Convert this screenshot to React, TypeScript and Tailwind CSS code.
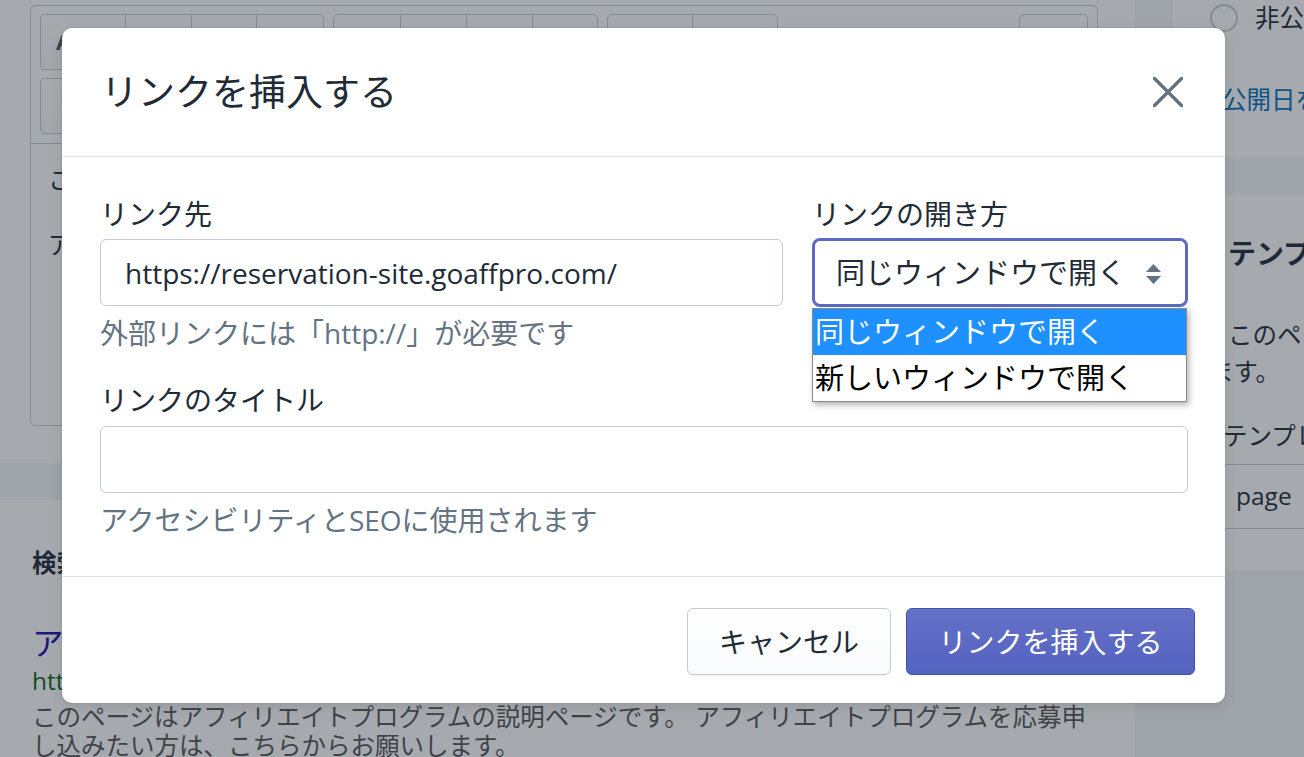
import React from "react";

function ToolGroup({ widths }: { widths: number[] }) {
  return (
    <div className="flex h-[56px] overflow-hidden rounded-[5px] border border-[#c4cdd5] bg-gradient-to-b from-white to-[#f9fafb]">
      {widths.map((w, i) => (
        <div
          key={i}
          style={{ width: w }}
          className={i === 0 ? "h-full" : "h-full border-l border-[#c4cdd5]"}
        />
      ))}
    </div>
  );
}

export default function App() {
  return (
    <div className="relative h-[757px] w-[1304px] overflow-hidden bg-[#f4f6f8] font-['Open_Sans','Noto_Sans_CJK_JP',sans-serif] text-[#212b36]">
      {/* background page */}
      <div className="flex h-full gap-[38px]">
        <div className="flex w-[1135px] shrink-0 flex-col gap-[37px]">
          <div className="bg-white pt-[5px] pb-[37px] pl-[30px] pr-[37px]">
            <div className="flex h-[421px] flex-col rounded-[5px] border border-[#c4cdd5]">
              <div className="flex flex-col gap-[8px] border-b border-[#c4cdd5] px-[9px] pt-[8px] pb-[9px]">
                <div className="flex gap-[9px]">
                  <div className="relative">
                    <ToolGroup widths={[84, 66, 65, 67]} />
                    <span className="absolute left-[16px] top-[14px] text-[22px] font-bold leading-[26px] text-[#454f5b]">A</span>
                  </div>
                  <ToolGroup widths={[66, 66, 66, 65]} />
                  <ToolGroup widths={[84, 85]} />
                  <div className="ml-auto">
                    <ToolGroup widths={[67]} />
                  </div>
                </div>
                <div className="flex gap-[9px]">
                  <ToolGroup widths={[84, 66, 66]} />
                </div>
              </div>
              <div className="flex flex-col gap-[29px] px-[17px] pt-[18px] text-[24.5px] leading-[36px]">
                <p className="whitespace-nowrap">このページはアフィリエイトプログラムの説明ページです。</p>
                <p className="whitespace-nowrap">アフィリエイトプログラムを応募申し込みたい方は、こちらからお願いします。</p>
              </div>
            </div>
          </div>
          <div className="flex-1 bg-white px-[32px] pt-[45px]">
            <h2 className="text-[24.5px] font-bold leading-[36px]">検索結果のプレビュー</h2>
            <p className="mt-[42px] text-[31.5px] leading-[40px] text-[#1a0dab]">アフィリエイトプログラム</p>
            <p className="mt-[3px] text-[24.5px] leading-[30px] text-[#006621]">https://reservation-site.goaffpro.com/pages/affiliate</p>
            <p className="mt-[6px] text-[24.5px] leading-[29px] text-[#545454]">
              このページはアフィリエイトプログラムの説明ページです。 アフィリエイトプログラムを応募申
              <br />
              し込みたい方は、こちらからお願いします。
            </p>
          </div>
        </div>
        <div className="flex flex-1 flex-col gap-[38px]">
          <div className="h-[157px] bg-white pl-[37px]">
            <div className="flex items-center gap-[17px] text-[24.5px] leading-[36px]">
              <span className="h-[28px] w-[28px] rounded-full border-2 border-[#c4cdd5] bg-white" />
              <span className="whitespace-nowrap">非公開</span>
            </div>
            <p className="mt-[46px] whitespace-nowrap pl-[12px] text-[24.5px] leading-[36px] text-[#006fbb]">公開日を設定</p>
          </div>
          <div className="h-[375px] bg-white pt-[38px]">
            <h3 className="whitespace-nowrap pl-[55px] text-[28px] font-bold leading-[40px]">テンプレート</h3>
            <p className="mt-[43px] whitespace-nowrap pl-[55px] text-[24.5px] leading-[37px]">このページのテンプレート</p>
            <p className="whitespace-nowrap pl-[36px] text-[24.5px] leading-[37px]">ます。</p>
            <p className="mt-[28px] whitespace-nowrap pl-[50px] text-[24.5px] leading-[36px]">テンプレート</p>
            <div className="ml-[37px] mt-[10px] flex h-[65px] items-center rounded-[5px] border border-[#c4cdd5] pl-[25px] text-[24.5px]">
              page
            </div>
          </div>
        </div>
      </div>

      {/* backdrop */}
      <div className="absolute inset-0 bg-[#212b36]/40" />

      {/* modal */}
      <div className="absolute left-[62px] top-[28px] flex h-[675px] w-[1163px] flex-col rounded-[10px] bg-white shadow-[0_0_0_1px_rgba(63,63,68,0.05),0_4px_12px_rgba(63,63,68,0.15)]">
        <div className="flex h-[129px] shrink-0 items-center justify-between border-b border-[#dfe3e8] pl-[39px] pr-[42px]">
          <h1 className="text-[37px] font-normal leading-[46px] text-[#212b36]">リンクを挿入する</h1>
          <svg width="30" height="30" viewBox="0 0 30 30" className="text-[#637381]">
            <path d="M1.5 1.5 L28.5 28.5 M28.5 1.5 L1.5 28.5" stroke="currentColor" strokeWidth="3.4" strokeLinecap="round" fill="none" />
          </svg>
        </div>

        <div className="flex-1 pl-[38px] pr-[37px] pt-[39px] text-[28px]">
          <div className="flex gap-[29px]">
            <div className="w-[683px]">
              <label className="block leading-[36px]">リンク先</label>
              <div className="mt-[7px] flex h-[67px] items-center rounded-[6px] border border-[#c4cdd5] pl-[24px] text-[#212b36]">
                https://reservation-site.goaffpro.com/
              </div>
              <p className="mt-[9px] leading-[36px] text-[#637381]">外部リンクには「http://」が必要です</p>
            </div>
            <div className="relative w-[376px]">
              <label className="block leading-[36px]">リンクの開き方</label>
              <div className="relative mt-[6px] flex h-[69px] items-center rounded-[8px] border-[3px] border-[#5c6ac4] pl-[21px] text-[29px] text-[#212b36]">
                同じウィンドウで開く
                <svg width="15" height="20" viewBox="0 0 15 20" className="absolute right-[24px] top-[23px] text-[#637381]">
                  <polygon points="0,8 7.5,0 15,8" fill="currentColor" />
                  <polygon points="0,12 15,12 7.5,20" fill="currentColor" />
                </svg>
                <div className="absolute left-[-3px] top-[67px] z-10 w-[375px] border border-[#8a8a8a] bg-white text-[29px] shadow-[2px_3px_6px_rgba(0,0,0,0.3)]">
                  <div className="h-[46px] bg-[#1e90ff] pl-[2px] leading-[46px] text-white">同じウィンドウで開く</div>
                  <div className="h-[46px] pl-[2px] leading-[46px] text-black">新しいウィンドウで開く</div>
                </div>
              </div>
            </div>
          </div>
          <label className="mt-[31px] block leading-[36px]">リンクのタイトル</label>
          <div className="mt-[8px] h-[67px] w-[1088px] rounded-[6px] border border-[#c4cdd5]" />
          <p className="mt-[9px] leading-[36px] text-[#637381]">アクセシビリティとSEOに使用されます</p>
        </div>

        <div className="flex h-[127px] shrink-0 items-start justify-end gap-[15px] border-t border-[#dfe3e8] pr-[30px] pt-[31px] text-[28px]">
          <button className="flex h-[67px] w-[204px] items-center justify-center rounded-[6px] border border-[#c4cdd5] bg-gradient-to-b from-white to-[#f9fafb] text-[#212b36] shadow-[0_1px_0_rgba(22,29,37,0.05)]">
            キャンセル
          </button>
          <button className="flex h-[67px] w-[289px] items-center justify-center rounded-[6px] border border-[#3f4eae] bg-gradient-to-b from-[#6371c7] to-[#5563c1] text-white shadow-[inset_0_1px_0_0_#6f7bcb]">
            リンクを挿入する
          </button>
        </div>
      </div>
    </div>
  );
}
